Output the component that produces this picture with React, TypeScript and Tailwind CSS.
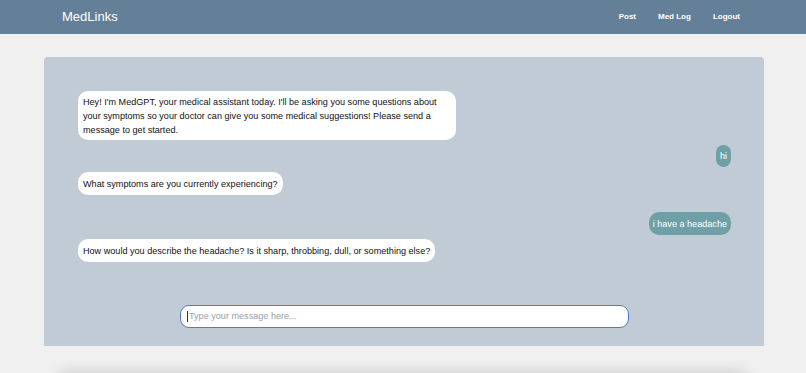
const font = { fontFamily: '"Liberation Sans", Arial, sans-serif' };

type Msg = { from: "bot" | "user"; text: string; cls: string };

const messages: Msg[] = [
  {
    from: "bot",
    text: "Hey! I'm MedGPT, your medical assistant today. I'll be asking you some questions about your symptoms so your doctor can give you some medical suggestions! Please send a message to get started.",
    cls: "mt-0 w-[378px] py-[3.5px]",
  },
  { from: "user", text: "hi", cls: "mt-[5px] py-[4px]" },
  { from: "bot", text: "What symptoms are you currently experiencing?", cls: "mt-[5px] py-[4.5px]" },
  { from: "user", text: "i have a headache", cls: "mt-[17px] py-[4.5px]" },
  {
    from: "bot",
    text: "How would you describe the headache? Is it sharp, throbbing, dull, or something else?",
    cls: "mt-[4px] py-[4.5px]",
  },
];

function Bubble({ msg }: { msg: Msg }) {
  if (msg.from === "user") {
    return (
      <div className={`self-end rounded-[10px] bg-[#6fa0a8] px-[4px] text-[9.1px] leading-[14px] text-white ${msg.cls}`}>
        {msg.text}
      </div>
    );
  }
  return (
    <div className={`self-start rounded-[10px] bg-white px-[5px] text-[9.1px] leading-[14px] text-[#111] ${msg.cls}`}>
      {msg.text}
    </div>
  );
}

export default function App() {
  return (
    <div className="h-[373px] overflow-hidden bg-[#f0f0f0]" style={font}>
      <nav className="flex h-[34px] items-center justify-between bg-[#647f98] pl-[62px] pr-[66px]">
        <div className="text-[13px] text-white">MedLinks</div>
        <div className="flex gap-[22px] text-[8px] font-bold text-white">
          <span>Post</span>
          <span>Med Log</span>
          <span>Logout</span>
        </div>
      </nav>

      <div className="ml-[44px] mr-[42px] mt-[23px] flex h-[289px] flex-col rounded-t-[4px] bg-[#c1cbd5] pb-[18px] pl-[34px] pr-[33px] pt-[34px]">
        <div className="flex flex-col">
          {messages.map((m, i) => (
            <Bubble key={i} msg={m} />
          ))}
        </div>

        <div className="mt-auto flex justify-center">
          <div className="flex h-[23px] w-[449px] items-center rounded-[9px] border-[1.5px] border-[#5079d4] bg-white px-[6px] text-[9.1px] text-[#9aa0a8]">
            <span className="mr-[1px] h-[11px] w-[1px] bg-[#333]" />
            Type your message here...
          </div>
        </div>
      </div>

      <div className="mx-[60px] mt-[32px] h-[40px] bg-[#f0f0f0] shadow-[0_-4px_16px_rgba(0,0,0,0.2)]" />
    </div>
  );
}
